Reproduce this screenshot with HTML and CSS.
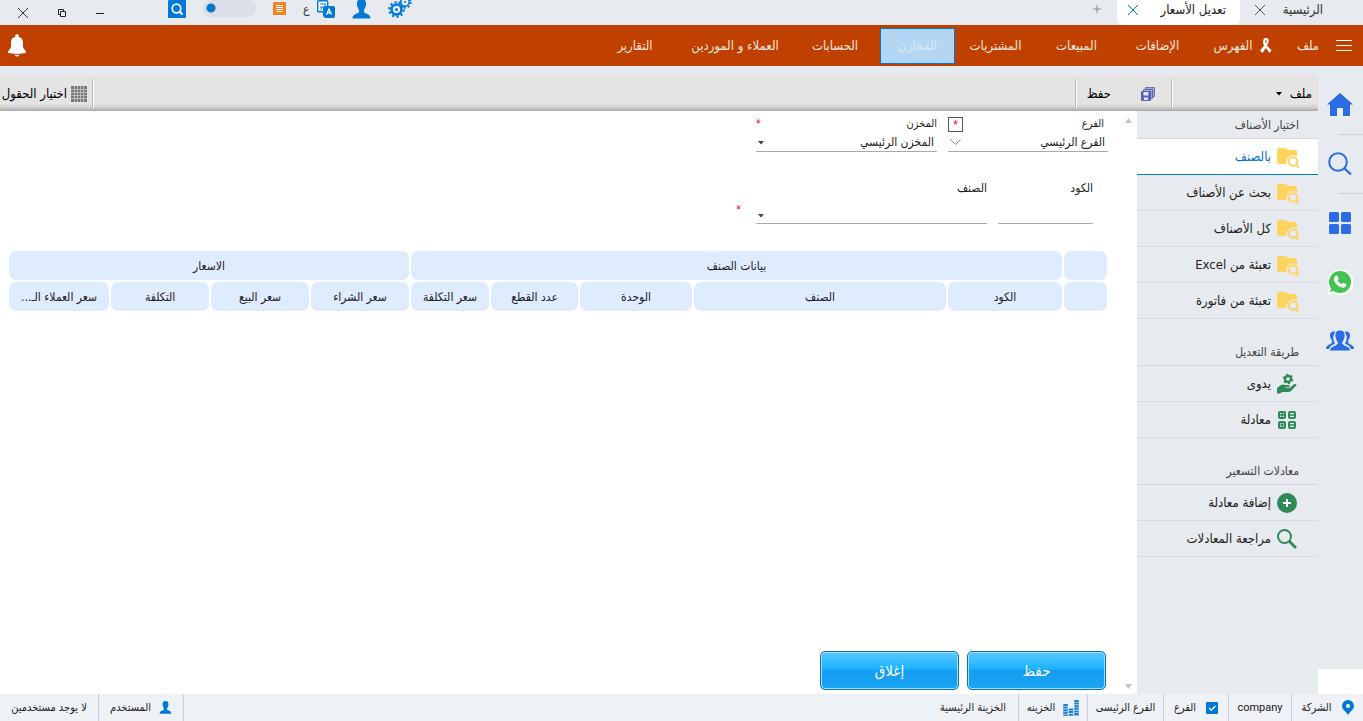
FILE: index.html
```html
<!DOCTYPE html>
<html lang="ar" dir="rtl">
<head>
<meta charset="utf-8">
<title>تعديل الأسعار</title>
<link rel="stylesheet" href="styles.css">
</head>
<body>
<svg class="defs" aria-hidden="true">
  <symbol id="close" viewBox="0 0 12 12"><path d="M1 1l10 10M11 1L1 11" fill="none" stroke="currentColor"/></symbol>
  <symbol id="folder" viewBox="0 -3 22 23"><path d="M0 2q0-2 2-2h6l3 2h7q2 0 2 2v4.500a7 7 0 0 0-10.500 7.500H2q-2 0-2-2z" fill="#ffd45e"/><circle cx="16" cy="13.500" r="4.300" fill="none" stroke="#ffd45e" stroke-width="2"/><path d="M19 16.500l3 3" stroke="#ffd45e" stroke-width="2.200"/></symbol>
  <symbol id="user" viewBox="0 0 18 20"><path d="M9 0c3.500 0 5 2.500 4.500 6-.3 2.500-1.500 4-2 5v2c1 2 6.500 1.500 6.500 6.500H0C0 14.500 5.500 15 6.500 13v-2c-.5-1-1.700-2.500-2-5C4 2.500 5.500 0 9 0z" fill="#0078d7"/></symbol>
  <symbol id="caret" viewBox="0 0 6 4"><path d="M0 0h6L3 3.500z" fill="currentColor"/></symbol>
</svg>

<header class="titlebar">
  <nav class="tabs">
    <div class="tab"><a href="#">الرئيسية</a><button class="plain" aria-label="إغلاق الرئيسية"><svg width="12" height="12"><use href="#close"/></svg></button></div>
    <div class="tab tab-active"><a href="#">تعديل الأسعار</a><button class="plain" aria-label="إغلاق تعديل الأسعار"><svg width="12" height="12"><use href="#close"/></svg></button></div>
    <button class="plain add" aria-label="تبويب جديد"><svg width="8" height="8" viewBox="0 0 8 8"><path d="M4 0v8M0 4h8" stroke="#888"/></svg></button>
  </nav>
  <div class="tools">
    <button class="plain" aria-label="الإعدادات"><svg width="24" height="21" viewBox="0 0 24 21"><g fill="none" stroke="#0078d7"><circle cx="8.500" cy="11.500" r="5" stroke-width="2.600"/><circle cx="8.500" cy="11.500" r="7.300" stroke-width="2" stroke-dasharray="2.300 2.287"/><circle cx="17" cy="4" r="4.200" stroke-width="1.600"/><circle cx="17" cy="4" r="5.800" stroke-width="1.800" stroke-dasharray="2 2.049"/></g><circle cx="8.500" cy="11.500" r="1.500" fill="#0078d7"/><circle cx="17" cy="4" r="1" fill="#0078d7"/></svg></button>
    <button class="plain" aria-label="المستخدم"><svg width="19" height="20"><use href="#user"/></svg></button>
    <button class="plain lang"><svg width="18" height="18" viewBox="0 0 18 18"><rect x=".7" y=".7" width="10" height="11" rx="1" fill="#fff" stroke="#0078d7" stroke-width="1.400"/><path d="M3 4h6M3 7h6M8 4v3M5 7c0 2-1 2-2 3M6 8l2 2" stroke="#0078d7" fill="none"/><path d="M8 6h8q2 0 2 2v8q0 2-2 2H8l-2-2V8z" fill="#0078d7"/><path d="M9.500 14.500L12 9l2.500 5.500M10.500 12.800h3" stroke="#fff" stroke-width="1.300" fill="none"/></svg><span>ع</span></button>
    <button class="plain" aria-label="القائمة"><svg width="13" height="13" viewBox="0 0 13 13"><path fill="#f5821f" d="M0 0h13v13H0z"/><path d="M3 3.500h7M3 5.500h7M3 7.500h7M3 9.500h7" stroke="#fff"/></svg></button>
    <input class="toggle" type="checkbox" aria-label="الوضع">
    <button class="plain" aria-label="بحث"><svg width="18" height="18" viewBox="0 0 18 18"><rect width="18" height="18" rx="1" fill="#0078d7"/><circle cx="8.500" cy="8.500" r="4.300" fill="none" stroke="#fff" stroke-width="1.700"/><path d="M11.500 11.500l3 3" stroke="#fff" stroke-width="2"/></svg></button>
  </div>
  <div class="window">
    <button class="plain" aria-label="تصغير"><svg width="10" height="10" viewBox="0 0 10 10"><path d="M1 5.500h8" stroke="#222"/></svg></button>
    <button class="plain" aria-label="استعادة"><svg width="10" height="10" viewBox="0 0 10 10"><path d="M3.500 6.500h-2v-5h5v2M3.500 3.500h5v5h-5z" fill="none" stroke="#222"/></svg></button>
    <button class="plain" aria-label="إغلاق"><svg width="12" height="12"><use href="#close"/></svg></button>
  </div>
</header>

<nav class="menubar">
  <button class="plain burger" aria-label="القائمة الرئيسية"><svg width="16" height="12" viewBox="0 0 16 12"><path d="M0 .5h16M0 5.500h16M0 10.500h16" stroke="#fff"/></svg></button>
  <a class="menu m-file" href="#">ملف</a>
  <a class="menu m-index" href="#"><svg width="12" height="15" viewBox="0 0 12 15"><path d="M4 .5q3-1.500 4.500 1 .8 3-1.500 6l4.500 5-2 2.500L5.800 10 2.500 15 0 12.500l4-5Q2 3 4 .5zM5.800 5.500Q7.500 2.500 6 2.200T5.800 5.500z" fill="#fff" fill-rule="evenodd"/></svg>الفهرس</a>
  <a class="menu m-mid" href="#">الإضافات</a>
  <a class="menu m-mid" href="#">المبيعات</a>
  <a class="menu m-mid" href="#">المشتريات</a>
  <a class="menu m-current" href="#">المخازن</a>
  <a class="menu m-wide" href="#">الحسابات</a>
  <a class="menu m-long" href="#">العملاء و الموردين</a>
  <a class="menu m-wide" href="#">التقارير</a>
  <button class="plain bell" aria-label="الإشعارات"><svg width="18" height="23" viewBox="0 0 18 23"><path d="M9 0a1.800 1.800 0 0 1 1.500 2.700C14 3.500 15 6 15 9v3.500c0 2.500 3 3.500 3 6.500-5 1-13 1-18 0 0-3 3-4 3-6.500V9c0-3 1-5.500 4.500-6.300A1.800 1.800 0 0 1 9 0zM6.500 20.700h5Q9 24.500 6.500 20.700z" fill="#fff"/></svg></button>
</nav>

<div class="body">
  <aside class="rail">
    <a href="#" aria-label="الرئيسية"><svg width="26" height="23" viewBox="0 0 26 23"><path d="M13 0l13 11.500h-3V23h-7v-8h-6v8H3V11.500H0z" fill="#2b6be4"/></svg></a>
    <a href="#" class="ruled" aria-label="بحث"><svg width="24" height="24" viewBox="0 0 24 24"><circle cx="10" cy="10" r="8.800" fill="none" stroke="#2b6be4" stroke-width="2"/><path d="M16.500 16.500l6.500 6" stroke="#2b6be4" stroke-width="2.300"/></svg></a>
    <a href="#" class="ruled" aria-label="التطبيقات"><svg width="22" height="22" viewBox="0 0 22 22" fill="#2b6be4"><rect width="10" height="10" rx="1.500"/><rect x="12" width="10" height="10" rx="1.500"/><rect y="12" width="10" height="10" rx="1.500"/><rect x="12" y="12" width="10" height="10" rx="1.500"/></svg></a>
    <a href="#" aria-label="واتساب"><svg width="26" height="26" viewBox="0 0 26 26"><path d="M0 26l2-7A13 12.800 0 1 1 7 24.300z" fill="#fff"/><circle cx="13" cy="13" r="11" fill="#40c351"/><path d="M3 23l2-6 4 4z" fill="#40c351"/><path d="M8.500 7c1-.8 2-.5 2.300.5l.8 2q.3.700-1 1.900c1 1.800 2.300 3 4.200 3.800 1.200-1.500 1.400-1.500 2-1.200l2.200 1q.7.400.4 1.300c-.4 1.800-2.500 2.700-4.400 2.200-4.500-1.200-8-5-8-8.500 0-1.200.6-2.200 1.500-3z" fill="#fff"/></svg></a>
    <a href="#" aria-label="العملاء"><svg width="28" height="22" viewBox="0 0 28 22" fill="#2b6be4"><path d="M10 2C5 0 3 4 4.500 8c1 2 1.500 3 1.500 4-.5 3-6 2-6 7h3c1-4 5-4 6-6-2-2-3-8 1-11zM18 2c5-2 7 2 5.500 6-1 2-1.500 3-1.500 4 .5 3 6 2 6 7h-3c-1-4-5-4-6-6 2-2 3-8-1-11z"/><path d="M14 0c4 0 5.500 3 5 6.500-.3 3-1.500 4.500-2.500 6 0 4 8 2.500 8 8.500h-21c0-6 8-4.500 8-8.500-1-1.500-2.200-3-2.500-6C8.500 3 10 0 14 0z" stroke="#e7eaef"/></svg></a>
    <div class="corner"></div>
  </aside>

  <div class="work">
    <div class="toolbar">
      <button class="t-file">ملف <svg width="6" height="4"><use href="#caret"/></svg></button>
      <button class="t-save"><svg width="14" height="14" viewBox="0 0 14 14"><g stroke="#4a4c96" stroke-width=".7" fill="#a3a6e0"><path d="M4.500.5h9v9h-9z"/><path d="M2.500 2.500h9v9h-9z"/><path d="M.5 4.500h9v9h-9z" fill="#5a5fc0"/></g><path d="M2.500 5h5v3.500h-5zM3 10.500h4V13H3z" fill="#e4e6fa"/></svg>حفظ</button>
      <button class="t-fields"><svg width="16" height="16" viewBox="0 0 16 16"><path d="M0 0h16v16H0z" fill="#777"/><path d="M0 3.500h16M0 6.500h16M0 9.500h16M0 12.500h16M3.500 0v16M6.500 0v16M9.500 0v16M12.500 0v16" stroke="#bbb"/></svg>اختيار الحقول</button>
    </div>
    <div class="split">
      <nav class="side">
        <h2>اختيار الأصناف</h2>
        <a class="current" href="#"><svg class="folder" width="22" height="23"><use href="#folder"/></svg>بالصنف</a>
        <a href="#"><svg class="folder" width="22" height="23"><use href="#folder"/></svg>بحث عن الأصناف</a>
        <a href="#"><svg class="folder" width="22" height="23"><use href="#folder"/></svg>كل الأصناف</a>
        <a href="#"><svg class="folder" width="22" height="23"><use href="#folder"/></svg>تعبئة من Excel</a>
        <a href="#"><svg class="folder" width="22" height="23"><use href="#folder"/></svg>تعبئة من فاتورة</a>
        <h2 class="later">طريقة التعديل</h2>
        <a href="#"><svg width="20" height="20" viewBox="0 0 20 20"><circle cx="11" cy="5" r="3" fill="none" stroke="#2e8b57" stroke-width="2.400"/><circle cx="11" cy="5" r="4.500" fill="none" stroke="#2e8b57" stroke-width="1.400" stroke-dasharray="2.300 2.412"/><path d="M0 14l4-3q2-1 4 0h4q1.500 1 0 2.300H8.500v.8h4l5-4q2-.5 2 1.200L14 17q-1 1-3 1H5l-2 1.500H0z" fill="#2e8b57"/></svg>يدوى</a>
        <a href="#"><svg width="20" height="20" viewBox="0 0 20 20"><g fill="none" stroke="#2e8b57" stroke-width="2"><rect x="2" y="2" width="6" height="6" rx="1"/><rect x="12" y="2" width="6" height="6" rx="1"/><rect x="2" y="12" width="6" height="6" rx="1"/><rect x="12" y="12" width="6" height="6" rx="1"/></g><path d="M5 3v4M3 5h4M13 5h4M3.500 13.500l3 3M6.500 13.500l-3 3M13 15h4" stroke="#2e8b57" stroke-width="1.300"/></svg>معادلة</a>
        <h2 class="later">معادلات التسعير</h2>
        <a href="#"><svg width="20" height="20" viewBox="0 0 20 20"><circle cx="10" cy="10" r="10" fill="#2e8b57"/><path d="M10 6v8M6 10h8" stroke="#fff" stroke-width="2"/></svg>إضافة معادلة</a>
        <a href="#"><svg width="20" height="20" viewBox="0 0 20 20"><circle cx="7.500" cy="7.500" r="6.500" fill="none" stroke="#2e8b57" stroke-width="2"/><path d="M12 12l7 7" stroke="#2e8b57" stroke-width="2.800"/></svg>مراجعة المعادلات</a>
      </nav>

      <main class="content">
        <form class="form">
          <div class="line">
            <div class="field f-branch">
              <div class="caption"><label for="branch">الفرع</label><span class="star boxed">*</span></div>
              <div class="control"><select id="branch"><option>الفرع الرئيسي</option></select><svg class="arrow chevron" width="11" height="6" viewBox="0 0 11 6"><path d="M.5.500l5 5 5-5" fill="none" stroke="#888"/></svg></div>
            </div>
            <div class="field f-store">
              <div class="caption"><label for="store">المخزن</label><span class="star">*</span></div>
              <div class="control"><select id="store"><option>المخزن الرئيسي</option></select><svg class="arrow" width="6" height="4"><use href="#caret"/></svg></div>
            </div>
          </div>
          <div class="line line-item">
            <div class="field f-code">
              <label for="code">الكود</label>
              <div class="control"><input id="code" type="text"></div>
            </div>
            <div class="field f-item">
              <label for="item">الصنف</label>
              <div class="control"><select id="item"><option></option></select><svg class="arrow" width="6" height="4"><use href="#caret"/></svg></div>
            </div>
            <span class="star lone">*</span>
          </div>
        </form>

        <table class="prices">
          <colgroup><col class="c-mark"><col class="c-code"><col><col class="c-unit"><col class="c-count"><col class="c-cost"><col class="c-price"><col class="c-price"><col class="c-price"><col class="c-client"></colgroup>
          <thead>
            <tr><th></th><th colspan="5">بيانات الصنف</th><th colspan="4">الاسعار</th></tr>
            <tr><th></th><th>الكود</th><th>الصنف</th><th>الوحدة</th><th>عدد القطع</th><th>سعر التكلفة</th><th>سعر الشراء</th><th>سعر البيع</th><th>التكلفة</th><th>سعر العملاء الـ...</th></tr>
          </thead>
        </table>

        <div class="actions"><button>حفظ</button><button>إغلاق</button></div>
        <div class="scroll" aria-hidden="true"><svg width="7" height="5" viewBox="0 0 7 5"><path d="M0 5h7L3.500 0z" fill="#c4c4c4"/></svg><svg width="7" height="5" viewBox="0 0 7 5"><path d="M0 0h7L3.500 5z" fill="#c4c4c4"/></svg></div>
      </main>
    </div>
  </div>
</div>

<footer class="status">
  <span class="cell s-company"><svg width="12" height="15" viewBox="0 0 12 15"><path d="M6 0a6 6 0 0 1 6 6c0 4-4 5-6 9-2-4-6-5-6-9a6 6 0 0 1 6-6z" fill="#0078d7"/><circle cx="6" cy="6" r="2" fill="#fff"/></svg>الشركة</span>
  <span class="cell s-name">company</span>
  <span class="cell s-branch"><svg width="12" height="12" viewBox="0 0 12 12"><rect width="12" height="12" rx="1" fill="#0078d7"/><path d="M3 6l2.200 2.200L9.500 4" fill="none" stroke="#fff" stroke-width="1.300"/></svg>الفرع</span>
  <span class="cell s-main">الفرع الرئيسى</span>
  <span class="cell s-safe"><svg width="16" height="16" viewBox="0 0 16 16"><path d="M2.500 4v12M8 8.500V16M13.500 0v16" stroke="#1b80cf" stroke-width="4.500" stroke-dasharray="2 .6"/></svg>الخزينه</span>
  <span class="cell s-safename">الخزينة الرئيسية</span>
  <span class="cell s-user"><svg width="13" height="13"><use href="#user"/></svg>المستخدم</span>
  <span class="cell s-none">لا يوجد مستخدمين</span>
</footer>
</body>
</html>
```
FILE: styles.css
```css
* { box-sizing: border-box; }

body {
  margin: 0;
  min-height: 100vh;
  display: flex;
  flex-direction: column;
  background: #e7eaef;
  color: #222;
  font: 12px/16px "DejaVu Sans Condensed", "DejaVu Sans", sans-serif;
}

a { color: inherit; text-decoration: none; }
svg { display: block; flex: none; }
button, input, select { font: inherit; color: inherit; }
.defs { position: absolute; width: 0; height: 0; }
.plain { display: flex; align-items: center; border: 0; padding: 0; background: none; }

/* Title bar */
.titlebar { display: flex; height: 25px; color: #333; }
.tabs { display: flex; font-size: 13px; }
.tab { display: flex; align-items: center; justify-content: space-between; width: 123px; padding: 0 40px 6px 14px; white-space: nowrap; }
.tab-active { padding: 0 14px 6px 10px; background: #fff; color: #222; border-radius: 0 0 6px 6px; }
.tab .plain { color: #555; }
.tab-active .plain { color: #0078c8; }
.add { padding: 0 16px 8px; }
.tools { display: flex; flex: 1; justify-content: flex-end; align-items: center; gap: 17px; padding-bottom: 8px; }
.lang { gap: 8px; }
.toggle { appearance: none; width: 53px; height: 17px; margin: 0; border-radius: 9px; background: radial-gradient(circle at 8px 8px, #0078c8 4px, #dadee6 5px); }
.window { display: flex; align-items: center; gap: 28px; padding: 0 63px 0 17px; }

/* Main menu */
.menubar { display: flex; align-items: center; height: 41px; padding: 0 11px 0 8px; background: #c04000; color: #f5e6df; font-size: 13px; }
.menu { display: flex; align-items: center; justify-content: center; height: 36px; white-space: nowrap; }
.burger { width: 24px; }
.m-file { width: 40px; }
.m-index { width: 90px; gap: 8px; }
.m-mid { width: 81px; }
.m-current { width: 75px; background: #b3d7f2; border: 1px solid #0078d7; color: #dfe8f2; }
.m-wide { width: 90px; }
.m-long { width: 110px; }
.bell { margin-right: auto; }

/* Page body */
.body { display: flex; flex: 1; padding-top: 9px; }
.rail { display: flex; flex-direction: column; width: 45px; flex: none; }
.rail a { display: flex; align-items: center; justify-content: center; height: 59px; padding-right: 1px; }
.rail .ruled { background: linear-gradient(#ccd0d8, #ccd0d8) right top / 25px 1px no-repeat; }
.corner { height: 25px; margin-top: auto; background: #fff; }
.work { display: flex; flex: 1; flex-direction: column; min-width: 0; }

.toolbar { display: flex; height: 36px; padding: 4px 0 3px; background: linear-gradient(#e4e4e4 80%, #d0d0d0 90%, #a8a8a8); font-size: 13px; }
.toolbar button { display: flex; align-items: center; padding: 0; border: 0; background: none; color: #000; white-space: nowrap; }
.toolbar .t-file { width: 146px; padding-right: 6px; gap: 8px; border-left: 1px solid #fff; box-shadow: -1px 0 #bbb; }
.toolbar .t-save { width: 96px; padding-right: 17px; gap: 30px; border-left: 1px solid #fff; box-shadow: -1px 0 #bbb; }
.toolbar .t-fields { width: 94px; margin-right: auto; padding-right: 6px; gap: 4px; border-right: 1px solid #fff; box-shadow: inset -1px 0 #bbb; }

.split { display: flex; flex: 1; }

/* Side list */
.side { width: 181px; flex: none; font-size: 13px; }
.side h2 { height: 28px; margin: 0; padding: 6px 19px 0 0; border-bottom: 1px solid #d2d6de; font: inherit; font-size: 12px; color: #444; }
.side .later { height: 47px; padding-top: 25px; }
.side a { display: flex; align-items: center; gap: 6px; height: 36px; padding-right: 21px; border-bottom: 1px solid #d5d9e0; }
.side .folder { margin-right: -2px; }
.side .current { background: #fff; color: #0078c8; border-bottom-color: #0078c8; }

/* Editing form */
.content { position: relative; display: flex; flex: 1; flex-direction: column; min-width: 0; background: #fff; }
.form { padding: 5px 29px 0 0; }
.line { display: flex; gap: 11px; }
.line-item { align-items: flex-end; padding: 28px 15px 0 0; }
.field { display: flex; flex-direction: column; }
.caption { display: flex; align-items: center; justify-content: space-between; height: 16px; font-size: 11px; }
.f-branch { width: 160px; }
.f-branch .caption { padding-right: 4px; }
.f-store { width: 181px; }
.f-code { width: 95px; }
.f-item { width: 231px; }
.control { position: relative; height: 20px; font-size: 12px; }
.line-item .control { height: 28px; }
.control select, .control input { appearance: none; display: block; width: 100%; height: 100%; margin: 0; padding: 0 3px; border: 0; border-bottom: 1px solid #aaa; border-radius: 0; background: none; }
.arrow { position: absolute; left: 2px; top: 9px; color: #444; pointer-events: none; }
.chevron { top: 7px; }
.line-item .arrow { top: 18px; }
.star { color: #f00; font: 12px/14px "Liberation Sans", sans-serif; }
.boxed { width: 15px; height: 15px; border: 1px solid #555; text-align: center; }
.lone { align-self: center; padding: 16px 4px 0 0; }

/* Price table */
.prices { width: calc(100% - 35px); margin: 25px 28px 0 7px; border-spacing: 2px; table-layout: fixed; }
.prices th { height: 29px; padding: 0 4px; border-radius: 7px; background: #dfebff; font-weight: 400; white-space: nowrap; overflow: hidden; }
.c-mark { width: 43px; }
.c-code { width: 114px; }
.c-unit { width: 112px; }
.c-count { width: 87px; }
.c-cost { width: 78px; }
.c-price { width: 98px; }
.c-client { width: 100px; }

.actions { display: flex; gap: 8px; margin-top: auto; padding: 0 31px 4px 0; }
.actions button { width: 139px; height: 39px; border: 1px solid #0a6fc0; border-radius: 5px; box-shadow: inset 0 0 0 1px #a5deff; background: linear-gradient(#5ac8ff, #1cb2ff 45%, #149cf0 52%, #1ca6f5); color: #fff; font-size: 15px; }
.scroll { position: absolute; top: 7px; bottom: 5px; right: 5px; display: flex; flex-direction: column; justify-content: space-between; }

/* Status bar */
.status { display: flex; height: 27px; background: #eef1f6; font-size: 11px; white-space: nowrap; }
.cell { display: flex; align-items: center; justify-content: center; gap: 10px; border-left: 1px solid #c9ced8; }
.s-company { width: 72px; }
.s-name { width: 63px; font-family: Roboto, sans-serif; }
.s-branch { width: 65px; }
.s-main { width: 76px; }
.s-safe { width: 69px; gap: 8px; }
.s-safename { width: 90px; border: 0; }
.s-user { width: 86px; margin-right: auto; border-right: 1px solid #c9ced8; gap: 8px; }
.s-none { width: 98px; border: 0; }
```
